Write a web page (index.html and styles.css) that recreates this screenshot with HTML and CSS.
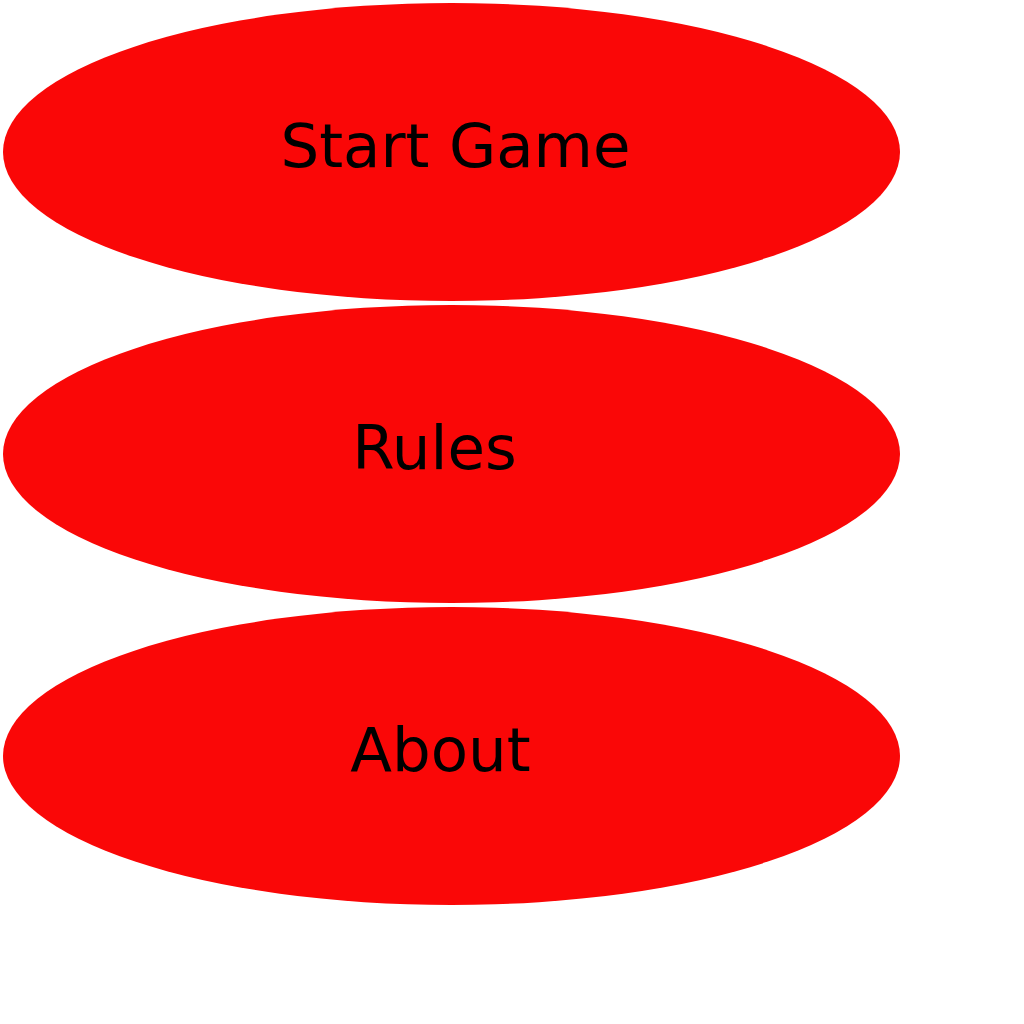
FILE: index.html
```html
<!DOCTYPE html>
<html>
<head>
<meta charset="utf-8">
<link rel="stylesheet" href="styles.css">
</head>
<body>
<div class="menu">
  <div class="oval oval-start">Start Game</div>
  <div class="oval oval-rules">Rules</div>
  <div class="oval oval-about">About</div>
</div>
</body>
</html>
```
FILE: styles.css
```css
html, body {
  margin: 0;
  padding: 0;
  background: #ffffff;
}
.menu {
  display: flex;
  flex-direction: column;
  gap: 4px;
  padding: 3px;
  font-family: "DejaVu Sans", sans-serif;
}
.oval {
  width: 897px;
  height: 298px;
  border-radius: 50%;
  background: #fa0707;
  color: #000000;
  font-size: 61px;
  display: flex;
  align-items: center;
  justify-content: center;
  box-sizing: border-box;
  padding-bottom: 14px;
}
.oval-start { padding-left: 8px; }
.oval-rules { padding-right: 34px; }
.oval-about { padding-right: 22px; }
```
